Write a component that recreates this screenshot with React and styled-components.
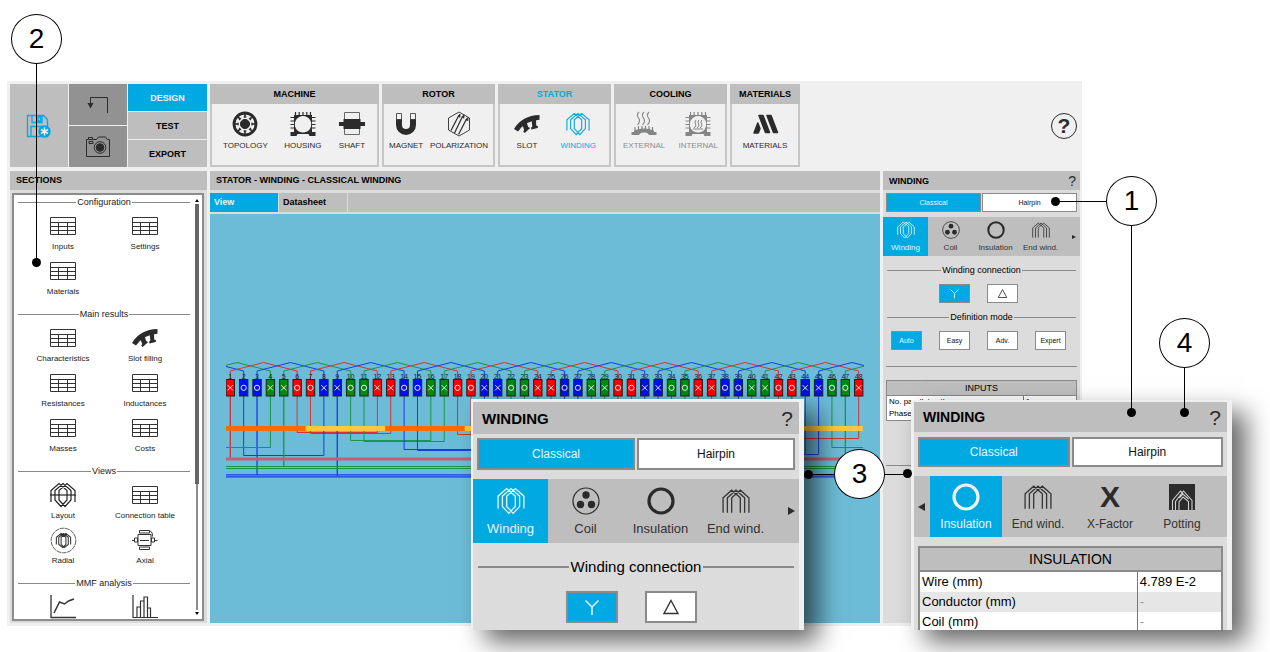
import styled, { createGlobalStyle, css, ThemeProvider } from "styled-components";

const BLUE = "#00a9e2";
const GREY = "#bebebe";
const DARK = "#2b2b2b";

const GlobalStyle = createGlobalStyle`
  * {
    box-sizing: border-box;
  }

  body {
    margin: 0;
    background: #fff;
    color: #000;
    font-family: "Liberation Sans", Arial, sans-serif;
  }

  button {
    font-family: inherit;
    padding: 0;
    margin: 0;
    border: 0;
    background: none;
    color: inherit;
    cursor: pointer;
  }

  svg {
    display: block;
  }
`;

// Size sets of the winding panel: docked, and the two enlarged copies
const small = {
  bar: 19, title: 9, titlePad: 6, help: 14,
  inset: 3, modeTop: 3, modeHeight: 19, modeFont: 7, modeGap: 1, line: 1,
  tabsTop: 5, tabHeight: 39, tabWidth: 45, tabFont: 8, icon: 18, tabPad: 4, arrow: 4,
  gap: 7, divider: 9, dividerLine: 14, choiceWidth: 31, choiceGap: 17, choicePad: 6,
};
const large = {
  bar: 32, title: 15, titlePad: 9, help: 21,
  inset: 4, modeTop: 4, modeHeight: 32, modeFont: 12, modeGap: 2, line: 2,
  tabsTop: 9, tabHeight: 64, tabWidth: 75, tabFont: 13, icon: 28, tabPad: 8, arrow: 7,
  gap: 12, divider: 15, dividerLine: 24, choiceWidth: 52, choiceGap: 27, choicePad: 10,
};
const medium = {
  ...large,
  bar: 30, title: 14, modeTop: 5, modeHeight: 30, tabHeight: 61, tabWidth: 72, tabFont: 12, tabPad: 7,
};

/* ---------- icons ---------- */

const TableIcon = () => (
  <svg width="26" height="18" viewBox="0 0 26 18" fill="none" stroke="#333">
    <path d="M.5.5h25v17H.5zM.5 5.500h25M.5 9.500h25M.5 13.500h25M8.500 5.500v12M17.500 5.500v12" />
  </svg>
);

const SlotIcon = ({ size = 28 }) => (
  <svg width={size} height={size} viewBox="0 0 28 28" fill={DARK}>
    <path d="M1 19Q9 5.500 26.500 5V9.800Q13 10.500 5 21.500Z" />
    <path d="M9 14l4-3.500 2.200 6.500 2 1-5.500 5-1.500-1.500 1-1.500z" />
    <path d="M18.500 9h4.500l.2 6.500 1.800.8-.3 1.700-6.200 1.500-.5-1.800 1.300-1.200z" />
  </svg>
);

const WindingIcon = ({ size = 24, color = "currentColor", axis }) => (
  <svg width={size} height={size} viewBox="-1 -1 26 26" fill="none" stroke={color} strokeWidth="1.200">
    <path d="M0 19V7.500L8 .5L16 7.500V17L10 23.500L4 17V7.500L12 .5L20 7.500V17L14 23.500L8 17V7.500L16 .5L24 7.500V19" />
    {axis && <path d="M-1 12H25" />}
  </svg>
);

const EndWindingIcon = ({ size = 24, color = "currentColor" }) => (
  <svg width={size} height={size} viewBox="-1 -2 26 26" fill="none" stroke={color} strokeWidth="1.200">
    <path d="M0 22V8L8 1L16 8V22M4 22V8L12 1L20 8V22M8 22V8L16 1L24 8V22" />
  </svg>
);

const CoilIcon = ({ size }) => (
  <svg width={size} height={size} viewBox="0 0 28 28">
    <circle cx="14" cy="14" r="13" fill="none" stroke={DARK} strokeWidth="1.200" />
    <g fill={DARK}>
      <circle cx="14" cy="8" r="3.700" />
      <circle cx="8.500" cy="17.500" r="3.700" />
      <circle cx="19.500" cy="17.500" r="3.700" />
    </g>
  </svg>
);

const InsulationIcon = ({ size, color = DARK }) => (
  <svg width={size} height={size} viewBox="0 0 28 28">
    <circle cx="14" cy="14" r="12" fill="none" stroke={color} strokeWidth="3.200" />
  </svg>
);

const XFactorIcon = styled.span`
  height: 28px;
  font-size: 30px;
  line-height: 28px;
  font-weight: bold;
  color: ${DARK};
`;

const PottingIcon = ({ size }) => (
  <svg width={size} height={size} viewBox="0 0 28 28">
    <path d="M1 1h26v26H1z" fill={DARK} />
    <path d="M4.500 27V17.500L12.500 8L15 10.500M7.500 27V18.500L15.500 8L24 17.500V27M11 27V19L15 14L20.500 18.500V27M11 15l4-4 5.500 5" fill="none" stroke="#d0d0d0" strokeWidth="1.100" />
  </svg>
);

const TopologyIcon = () => (
  <svg width="28" height="28" viewBox="-14 -14 28 28" stroke={DARK} fill="none">
    <circle r="11" strokeWidth="2.800" />
    <circle r="4.600" fill={DARK} />
    {[0, 45, 90, 135, 180, 225, 270, 315].map((a) => (
      <g key={a} transform={`rotate(${a})`}>
        <path d="M0 -10V-6.500" strokeWidth="1.600" />
        <path d="M-1.500 -7H1.500" strokeWidth="1" />
      </g>
    ))}
  </svg>
);

const HousingIcon = ({ color = DARK, steam }) => (
  <svg width="28" height="28" viewBox="0 0 28 28">
    <path fill={color} fillRule="evenodd" d="M5 5h18v17h3.500v4h-6l-1-2h-11l-1 2h-6v-4H5zM14 6a8.300 8.300 0 1 0 .1 0z" />
    <path stroke={color} strokeWidth="1.200" d="M6.500 2v4M10.200 2v4M14 2v3M17.800 2v4M21.500 2v4M1.500 7.500H6M1.500 11H6M1.500 14.500H6M1.500 18H6M22 7.500h4.500M22 11h4.500M22 14.500h4.500M22 18h4.500" />
    {steam && <path fill="none" stroke={color} d="M12 10q-2 2-.5 4t-1.500 4M15 10q-2 2-.5 4t-1.500 4M18 10q-2 2-.5 4t-1.500 4M9 19h10" />}
  </svg>
);

const ShaftIcon = () => (
  <svg width="28" height="28" viewBox="0 0 28 28">
    <path d="M6.500 2.500h15v22h-15z" fill="none" stroke="#666" />
    <path d="M5.500 9h17v3h4.500v4h-4.500v3h-17v-3H1v-4h4.500z" fill={DARK} />
  </svg>
);

const MagnetIcon = () => (
  <svg width="28" height="28" viewBox="0 0 28 28">
    <path d="M4 9h6v6a4 4 0 0 0 8 0V9h6v6a10 10 0 0 1-20 0z" fill={DARK} />
    <path d="M4.500 3.500h5v6h-5zM18.500 3.500h5v6h-5z" fill="#f4f4f4" stroke={DARK} strokeWidth=".8" />
  </svg>
);

const PolarizationIcon = () => (
  <svg width="28" height="28" viewBox="0 0 28 28" fill="none" stroke={DARK} strokeWidth=".9">
    <path d="M14 2l10.500 6v12L14 26 3.500 20V8z" />
    <path d="M6 20.500L13.500 6M9.500 23L17.500 6.500M13.500 24.500L21.500 9" strokeWidth="1.200" />
    <path d="M13 6l2-2-.2 3.300zM17 7l2-2.200-.2 3.300zM21 9.500l2-2-.2 3.300z" fill={DARK} />
  </svg>
);

const ExternalIcon = () => (
  <svg width="28" height="28" viewBox="0 0 28 28" fill="none" stroke="#858585">
    <path d="M9 2q-3 3-.5 6t-1 7M14 2q-3 3-.5 6t-1 7M19 2q-3 3-.5 6t-1 7" strokeWidth="1.100" />
    <path d="M5 17v4M8.500 16v4M12 16v3M15.500 16v3M19 16v4M22.500 17v4" strokeWidth="1.200" />
    <path d="M4 20.500q10-4 20 0V22h2.500v3h-7.500l-1-1.500q-4-2-8 0L9 25H1.500v-3H4z" fill="#858585" stroke="none" />
  </svg>
);

const MaterialsIcon = () => (
  <svg width="28" height="28" viewBox="0 0 28 28" stroke={DARK} fill={DARK} strokeLinejoin="round">
    <path d="M8 5.500h4l6.500 17h-4zM16 5.500h4l6.500 17h-4zM6.800 13l2.200 5.500-1.700 4.500H3z" strokeWidth="1.500" />
  </svg>
);

const SaveIcon = () => (
  <svg width="26" height="26" viewBox="0 0 26 26" fill="none" stroke={BLUE} strokeWidth="1.300">
    <path d="M1.500 2.500h16l4 4v17h-20zM6 2.500v7h10v-7M12 4h2.500v4H12zM5 23.500v-10h12" />
    <circle cx="18.500" cy="18.500" r="6.200" fill={BLUE} stroke="none" />
    <path d="M18.500 14.500v8M15 16.500l7 4M22 16.500l-7 4" stroke="#e8f6fb" strokeWidth="1.500" />
  </svg>
);

const BackIcon = () => (
  <svg width="24" height="20" viewBox="0 0 24 20" fill="none" stroke={DARK}>
    <path d="M21.500 18V2.500H4.500V9" />
    <path d="M1.500 8h6l-3 5.500z" fill={DARK} stroke="none" />
  </svg>
);

const CameraIcon = () => (
  <svg width="26" height="22" viewBox="0 0 26 22" fill="none" stroke={DARK}>
    <path d="M1.500 3.500h10l2-2.500h7l2 2.500h2v17h-23zM3.500 3V1.500h4V3M4 5.500h4v2H4z" />
    <circle cx="15" cy="11.500" r="5.800" />
    <circle cx="15" cy="11.500" r="3.800" fill={DARK} />
  </svg>
);

const RadialIcon = () => (
  <svg width="27" height="27" viewBox="-1 -1 34 34" fill="none" stroke="#333">
    <circle cx="16" cy="16" r="15.500" strokeDasharray="6 .8" />
    <path strokeWidth="1.300" d="M7 21V12L13 7L19 12V21L15 25L10 21V12L16 7L22 12V21L17 25L13 21V12L19 7L25 12V21" />
  </svg>
);

const AxialIcon = () => (
  <svg width="26" height="22" viewBox="0 0 26 22" fill="none" stroke="#333">
    <path d="M6 5.500h13v11H6zM7.500 1.500h10v2.500h-10zM7.500 18h10v2.500h-10zM2.500 9h3v4h-3zM19.500 9h3v4h-3zM0 11.500h2M23 11.500h2.500M8 11.500h9M18 1.500q3 2 2.500 6" />
  </svg>
);

const CurveIcon = () => (
  <svg width="26" height="24" viewBox="0 0 26 24" fill="none" stroke="#333" strokeWidth="1.300">
    <path d="M1 0v22.500h25" />
    <path d="M4 18L9.500 7l5 2 4-3L24 4" strokeWidth="1.500" />
  </svg>
);

const BarsIcon = () => (
  <svg width="26" height="24" viewBox="0 0 26 24" fill="none" stroke="#333" strokeWidth="1.200">
    <path d="M1 0v22.500h25M5 22V12h3.500v10M8.500 12V6H12v16M12 6V2h3.500v20M15.500 13H18.500v9" />
  </svg>
);

/* ---------- page ---------- */

const Page = styled.main`
  position: relative;
  display: flex;
  flex-direction: column;
  height: 100vh;
  min-height: 600px;
  padding: 81px 188px 26px 7px;
  overflow: hidden;
`;

const Window = styled.div`
  flex: 1;
  min-height: 0;
  display: flex;
  flex-direction: column;
  gap: 4px;
  padding: 3px 2px 3px 3px;
  background: #f0f0f0;
`;

const Ribbon = styled.header`
  display: flex;
  gap: 3px;
  height: 83px;
`;

const QuickTiles = styled.div`
  display: grid;
  grid-template-columns: 58px 58px 79px;
  gap: 1px;
  width: 197px;
`;

const TileColumn = styled.div`
  display: flex;
  flex-direction: column;
  gap: 1px;
`;

const Tile = styled.button`
  flex: 1;
  display: flex;
  align-items: center;
  justify-content: center;
  background: ${(p) => (p.$dark ? "#929292" : GREY)};
`;

const ModeTile = styled.button`
  flex: 1;
  font-size: 9px;
  font-weight: bold;
  background: ${(p) => (p.$active ? BLUE : GREY)};
  color: ${(p) => (p.$active ? "#e8f6fb" : "#000")};
`;

const Group = styled.section`
  width: ${(p) => p.$width}px;
  border: 2px solid #c6c6c6;
  border-top: 0;
`;

const GroupTitle = styled.h2`
  margin: 0 -2px;
  background: ${GREY};
  color: ${(p) => (p.$active ? BLUE : "#000")};
  font-size: 9px;
  line-height: 20px;
  text-align: center;
`;

const GroupBody = styled.div`
  display: flex;
  justify-content: ${(p) => (p.$single ? "center" : "space-between")};
  padding: 6px ${(p) => p.$pad}px 0;
`;

const GroupButton = styled.button`
  display: flex;
  flex-direction: column;
  align-items: center;
  gap: 2px;
  min-width: 28px;
  font-size: 8px;
  line-height: 12px;
  color: ${(p) => p.$color || DARK};

  svg {
    height: 28px;
  }
`;

const HelpButton = styled.button`
  align-self: center;
  margin: 0 3px 0 auto;
  width: 26px;
  height: 26px;
  border: 1px solid ${DARK};
  border-radius: 50%;
  font-size: 21px;
  line-height: 24px;
  font-weight: bold;
  color: ${DARK};
`;

const Columns = styled.div`
  flex: 1;
  min-height: 0;
  display: flex;
  gap: 3px;
`;

const Panel = styled.section`
  display: flex;
  flex-direction: column;
  min-height: 0;
  background: #dcdcdc;
  ${(p) => (p.$grow ? css`flex: 1; min-width: 0;` : css`width: 197px;`)}
`;

const PanelTitle = styled.h2`
  margin: 0;
  padding-left: 6px;
  background: ${GREY};
  font-size: 9px;
  line-height: 19px;
`;

const SectionBox = styled.div`
  flex: 1;
  min-height: 0;
  display: flex;
  margin: 3px 3px 2px 2px;
  padding-right: 3px;
  border: 2px solid #8c8c8c;
  background: #fff;
`;

const SectionList = styled.div`
  flex: 1;
  overflow: hidden;
  display: flex;
  flex-direction: column;
  gap: 4px;
  padding: 0 4px;
`;

const SectionTitle = styled.h3`
  display: flex;
  align-items: center;
  gap: 1px;
  margin: 0 0 4px;
  font-size: 9px;
  line-height: 14px;
  font-weight: normal;
  color: #222;

  &::before,
  &::after {
    content: "";
    flex: 1;
    height: 1px;
    background: #888;
  }
`;

const SectionGrid = styled.div`
  display: grid;
  grid-template-columns: 1fr 1fr;
  padding: 0 4px;
`;

const SectionItem = styled.button`
  display: flex;
  flex-direction: column;
  align-items: center;
  height: 45px;
  font-size: 8px;
  line-height: 12px;
  white-space: nowrap;
  color: #222;
`;

const ItemIcon = styled.span`
  height: 28px;
  display: flex;
  align-items: center;
  padding-bottom: 2px;
`;

const ScrollBar = styled.div`
  width: 5px;
  display: flex;
  flex-direction: column;
  align-items: center;
  padding: 2px 0;
`;

const Track = styled.div`
  flex: 1;
  width: 2px;
  background: #8c8c8c;
`;

const Thumb = styled.div`
  width: 4px;
  height: 69%;
  margin-left: -1px;
  background: #666;
`;

const ScrollArrow = styled.span`
  border: 2px solid transparent;
  border-${(p) => (p.$up ? "bottom" : "top")}: 3px solid #000;
  margin-${(p) => (p.$up ? "bottom" : "top")}: 2px;
`;

const ViewTabs = styled.nav`
  display: flex;
  gap: 1px;
  margin: 3px 0 2px;

  &::after {
    content: "";
    flex: 1;
    background: ${GREY};
  }
`;

const ViewTab = styled.button`
  width: 68px;
  padding-left: 4px;
  text-align: left;
  font-size: 9px;
  font-weight: bold;
  line-height: 19px;
  background: ${(p) => (p.$active ? BLUE : GREY)};
  color: ${(p) => (p.$active ? "#e8f6fb" : "#000")};
`;

const Canvas = styled.div`
  flex: 1;
  min-height: 0;
  display: flex;
  align-items: center;
  padding: 0 16px;
  background: #6dbcd7;

  svg {
    width: 100%;
    height: auto;
  }
`;

/* ---------- winding panel, sized by the theme ---------- */

const Bar = styled.h2`
  display: flex;
  justify-content: space-between;
  align-items: center;
  margin: 0;
  height: ${(p) => p.theme.bar}px;
  padding: 0 ${(p) => p.theme.inset + p.theme.line}px 0 ${(p) => p.theme.titlePad}px;
  background: ${GREY};
  font-size: ${(p) => p.theme.title}px;
`;

const BarHelp = styled.button`
  font-size: ${(p) => p.theme.help}px;
  line-height: 1;
  color: ${DARK};
`;

const ModeRow = styled.div`
  display: flex;
  gap: ${(p) => p.theme.modeGap}px;
  margin: ${(p) => p.theme.modeTop}px ${(p) => p.theme.inset}px ${(p) => p.theme.tabsTop}px;
`;

const ModeButton = styled.button`
  display: flex;
  align-items: center;
  justify-content: center;
  height: ${(p) => p.theme.modeHeight}px;
  border: ${(p) => p.theme.line}px solid #8a8a8a;
  background: ${(p) => (p.$active ? BLUE : "#fff")};
  color: ${(p) => (p.$active ? "#e8f6fb" : "#111")};
  font-size: ${(p) => p.theme.modeFont}px;
  ${(p) => (p.$choice ? css`width: ${p.theme.choiceWidth}px;` : css`flex: 1;`)}
`;

const TabRow = styled.nav`
  display: flex;
  align-items: center;
  height: ${(p) => p.theme.tabHeight}px;
  background: ${GREY};
`;

const Tab = styled.button`
  display: flex;
  flex-direction: column;
  align-items: center;
  justify-content: space-between;
  width: ${(p) => p.theme.tabWidth}px;
  height: 100%;
  padding: ${(p) => p.theme.tabPad}px 0;
  background: ${(p) => (p.$active ? BLUE : "none")};
  color: ${(p) => (p.$active ? "#e8f6fb" : "#333")};
  font-size: ${(p) => p.theme.tabFont}px;
  line-height: 1;
  white-space: nowrap;
`;

const TabArrow = styled.button`
  font-size: 0;
  margin: ${(p) => (p.$left ? "0 5px 0 4px" : "0 4px 0 auto")};
  border: solid transparent;
  border-width: ${(p) => Math.ceil(p.theme.arrow / 2)}px ${(p) => p.theme.arrow}px;
  border-${(p) => (p.$left ? "right" : "left")}-color: ${DARK};
  border-${(p) => (p.$left ? "left" : "right")}-width: 0;
`;

const Divider = styled.h3`
  display: flex;
  align-items: center;
  gap: ${(p) => p.theme.line}px;
  margin: ${(p) => p.theme.gap}px ${(p) => p.theme.inset + 1}px;
  font-size: ${(p) => p.theme.divider}px;
  line-height: ${(p) => p.theme.dividerLine}px;
  font-weight: normal;

  &::before,
  &::after {
    content: "";
    flex: 1;
    height: ${(p) => p.theme.line}px;
    background: #8a8a8a;
  }
`;

const Choices = styled.div`
  display: flex;
  justify-content: center;
  gap: ${(p) => p.theme.choiceGap}px;
  padding-right: ${(p) => p.theme.choicePad}px;
`;

const Rule = styled.hr`
  margin: ${(p) => p.$top}px 3px 0;
  border: 0;
  border-top: 1px solid #8a8a8a;
`;

const Sheet = styled.table`
  margin: ${(p) => p.$top}px ${(p) => p.theme.inset}px 0;
  border: ${(p) => p.theme.line}px solid #8a8a8a;
  border-collapse: collapse;
  table-layout: fixed;
  width: calc(100% - ${(p) => p.theme.inset * 2}px);
  background: #fff;
  font-size: ${(p) => (p.$big ? 13 : 8)}px;
  line-height: ${(p) => (p.$big ? 20 : 12)}px;

  th {
    padding: 0;
    background: ${GREY};
    border-bottom: ${(p) => p.theme.line}px solid #8a8a8a;
    font-size: ${(p) => (p.$big ? 14 : 9)}px;
    line-height: ${(p) => (p.$big ? 22 : 14)}px;
    font-weight: normal;
  }

  td {
    padding: 0 2px;
    white-space: nowrap;
  }

  td + td {
    border-left: 1px solid #777;
  }

  tr:nth-child(even) td {
    background: ${(p) => (p.$big ? "#e6e6e6" : "#fff")};
  }
`;

const NameColumn = styled.col`
  width: 72%;
`;

const Muted = styled.span`
  color: #999;
`;

// Enlarged copies float over the window
const Popup = styled.section`
  position: absolute;
  left: ${(p) => p.$left}px;
  top: ${(p) => p.$top}px;
  width: ${(p) => p.$width}px;
  height: ${(p) => p.$height}px;
  overflow: hidden;
  border: solid #f0f0f0;
  border-width: ${(p) => p.$edge};
  background: #dcdcdc;
  box-shadow: 14px 12px 24px rgba(0, 0, 0, 0.6);
`;

/* ---------- callouts ---------- */

const Bubble = styled.span`
  position: absolute;
  left: ${(p) => p.$x - 25}px;
  top: ${(p) => p.$y - 25}px;
  width: 51px;
  height: 50px;
  border: 1px solid #000;
  border-radius: 50%;
  background: #fff;
  font-size: 28px;
  line-height: 48px;
  text-align: center;
`;

const Leader = styled.span`
  position: absolute;
  left: ${(p) => p.$x}px;
  top: ${(p) => p.$y}px;
  width: ${(p) => p.$w || 1}px;
  height: ${(p) => p.$h || 1}px;
  background: #000;
`;

const Dot = styled.span`
  position: absolute;
  left: ${(p) => p.$x - 4}px;
  top: ${(p) => p.$y - 4}px;
  width: 9px;
  height: 9px;
  border-radius: 50%;
  background: #000;
`;

/* ---------- data ---------- */

const groups = [
  { title: "MACHINE", width: 169, pad: 11, items: [
    ["TOPOLOGY", <TopologyIcon />], ["HOUSING", <HousingIcon />], ["SHAFT", <ShaftIcon />]] },
  { title: "ROTOR", width: 113, pad: 5, items: [
    ["MAGNET", <MagnetIcon />], ["POLARIZATION", <PolarizationIcon />]] },
  { title: "STATOR", width: 113, pad: 13, active: true, items: [
    ["SLOT", <SlotIcon />], ["WINDING", <WindingIcon />, BLUE]] },
  { title: "COOLING", width: 113, pad: 7, items: [
    ["EXTERNAL", <ExternalIcon />, "#8c8c8c"], ["INTERNAL", <HousingIcon color="#858585" steam />, "#8c8c8c"]] },
  { title: "MATERIALS", width: 70, pad: 7, items: [["MATERIALS", <MaterialsIcon />]] },
];

const table = <TableIcon />;

const sections = [
  { title: "Configuration", items: [["Inputs", table], ["Settings", table], ["Materials", table]] },
  { title: "Main results", items: [
    ["Characteristics", table], ["Slot filling", <SlotIcon />],
    ["Resistances", table], ["Inductances", table],
    ["Masses", table], ["Costs", table]] },
  { title: "Views", items: [
    ["Layout", <WindingIcon axis size={26} />], ["Connection table", table],
    ["Radial", <RadialIcon />], ["Axial", <AxialIcon />]] },
  { title: "MMF analysis", items: [["", <CurveIcon />, "MMF curve"], ["", <BarsIcon />, "MMF harmonics"]] },
];

/* ---------- winding diagram ---------- */

const RED = "#ff0000";
const GREEN = "#008a10";
const NAVY = "#0010f0";
const phases = [RED, NAVY, NAVY, GREEN, GREEN, RED];
const signs = "XOOXXOOXXOOX";

const slotX = (n) => 230.300 + (n - 1) * 13.370;
const phaseOf = (n) => phases[(n + 11) % 6];

// [from slot, to slot, depth]
const jumpers = [
  [6, 12, 432], [7, 13, 433], [10, 16, 440], [11, 17, 441], [2, 8, 455],
  [14, 20, 449], [15, 21, 450], [18, 24, 434], [19, 25, 435], [42, 48, 438],
  [38, 44, 454], [39, 45, 454], [22, 28, 440], [23, 29, 441], [26, 32, 449],
  [27, 33, 450], [30, 36, 434], [31, 37, 435], [34, 40, 441], [35, 41, 441],
];
const drops = [[1, 459], [3, 475], [5, 467], [9, 476], [47, 468], [43, 459]];

const WindingDiagram = () => (
  <svg viewBox="226 358 638 121" fill="none">
    <g opacity=".75">
      {Array.from({ length: 26 }, (_, i) => i * 2 - 3).map((n) => {
        const a = slotX(n);
        const b = slotX(n + 5);
        return <path key={n} stroke={phaseOf(n)} d={`M${a} 380V371L${(a + b) / 2} 362.500L${b} 371V380`} />;
      })}
      {jumpers.map(([a, b, y]) => (
        <path key={a} stroke={phaseOf(a)} d={`M${slotX(a)} 396V${y + 0.5}H${slotX(b)}V396`} />
      ))}
      {drops.map(([n, y]) => (
        <path key={n} stroke={phaseOf(n)} strokeWidth="1.300" d={`M${slotX(n)} 396V${y}`} />
      ))}
      <path stroke={GREEN} d={`M${slotX(4)} 396V447.500H226M${slotX(46)} 396V447.500H863`} />
      <path stroke="#e04050" strokeWidth="3" d="M226 459H863" />
      <path stroke={GREEN} strokeWidth="1.200" d="M226 466.500H863M226 468.500H863" />
      <path stroke={NAVY} strokeWidth="1.200" d="M226 474.800H863M226 476.800H863" />
    </g>
    {Array.from({ length: 8 }, (_, i) => (
      <rect key={i} x={226 + i * 79.600} y="426" width="79.600" height="5" fill={i % 2 ? "#ffc83c" : "#ff6a00"} />
    ))}
    {Array.from({ length: 48 }, (_, i) => {
      const x = slotX(i + 1);
      return (
        <g key={i}>
          <text x={x} y="379" textAnchor="middle" fontSize="7" fill="#123">{i + 1}</text>
          <rect x={x - 4.200} y="379.500" width="8.400" height="16.500" fill={phaseOf(i + 1)} stroke="#222" />
          {signs[i % 12] === "X" ? (
            <path stroke="#fff" d={`M${x - 2.600} 385.200l5.200 5.200m0-5.200l-5.200 5.200`} strokeWidth=".9" />
          ) : (
            <circle cx={x} cy="387.800" r="2.600" stroke="#fff" strokeWidth=".9" />
          )}
        </g>
      );
    })}
  </svg>
);

/* ---------- parts ---------- */

const StarIcon = ({ size }) => (
  <svg width={size} height={size} viewBox="0 0 18 18" fill="none" stroke="#e8f6fb" strokeWidth="1.500">
    <path d="M2.500 2.500L9 9L15.500 2.500M9 9V17" />
  </svg>
);

const DeltaIcon = ({ size }) => (
  <svg width={size} height={size} viewBox="0 0 18 18" fill="none" stroke="#333" strokeWidth="1.400">
    <path d="M9 2.500L16 15.500H2Z" />
  </svg>
);

const PanelHead = () => (
  <>
    <Bar>
      WINDING
      <BarHelp>?</BarHelp>
    </Bar>
    <ModeRow>
      <ModeButton $active>Classical</ModeButton>
      <ModeButton>Hairpin</ModeButton>
    </ModeRow>
  </>
);

const MainTabs = ({ icon }) => (
  <TabRow>
    <Tab $active><WindingIcon size={icon} />Winding</Tab>
    <Tab><CoilIcon size={icon} />Coil</Tab>
    <Tab><InsulationIcon size={icon} />Insulation</Tab>
    <Tab><EndWindingIcon size={icon} />End wind.</Tab>
    <TabArrow aria-label="Next tabs" />
  </TabRow>
);

const Connection = ({ icon }) => (
  <>
    <Divider>Winding connection</Divider>
    <Choices>
      <ModeButton $choice $active aria-label="Star"><StarIcon size={icon} /></ModeButton>
      <ModeButton $choice aria-label="Delta"><DeltaIcon size={icon} /></ModeButton>
    </Choices>
  </>
);

const App = () => {
  return <Page>
    <GlobalStyle />
    <Window>
      <Ribbon>
        <QuickTiles>
          <Tile aria-label="Save"><SaveIcon /></Tile>
          <TileColumn>
            <Tile $dark aria-label="Back"><BackIcon /></Tile>
            <Tile $dark aria-label="Snapshot"><CameraIcon /></Tile>
          </TileColumn>
          <TileColumn>
            <ModeTile $active>DESIGN</ModeTile>
            <ModeTile>TEST</ModeTile>
            <ModeTile>EXPORT</ModeTile>
          </TileColumn>
        </QuickTiles>
        {groups.map((g) => (
          <Group key={g.title} $width={g.width}>
            <GroupTitle $active={g.active}>{g.title}</GroupTitle>
            <GroupBody $pad={g.pad} $single={g.items.length === 1}>
              {g.items.map(([label, icon, color]) => (
                <GroupButton key={label} $color={color}>{icon}{label}</GroupButton>
              ))}
            </GroupBody>
          </Group>
        ))}
        <HelpButton>?</HelpButton>
      </Ribbon>

      <Columns>
        <Panel>
          <PanelTitle>SECTIONS</PanelTitle>
          <SectionBox>
            <SectionList>
              {sections.map((s) => (
                <section key={s.title}>
                  <SectionTitle>{s.title}</SectionTitle>
                  <SectionGrid>
                    {s.items.map(([label, icon, hint]) => (
                      <SectionItem key={label || hint} aria-label={hint}>
                        <ItemIcon>{icon}</ItemIcon>
                        {label}
                      </SectionItem>
                    ))}
                  </SectionGrid>
                </section>
              ))}
            </SectionList>
            <ScrollBar>
              <ScrollArrow $up />
              <Track><Thumb /></Track>
              <ScrollArrow />
            </ScrollBar>
          </SectionBox>
        </Panel>

        <Panel $grow>
          <PanelTitle>STATOR - WINDING - CLASSICAL WINDING</PanelTitle>
          <ViewTabs>
            <ViewTab $active>View</ViewTab>
            <ViewTab>Datasheet</ViewTab>
          </ViewTabs>
          <Canvas>
            <WindingDiagram />
          </Canvas>
        </Panel>

        <ThemeProvider theme={small}>
          <Panel>
            <PanelHead />
            <MainTabs icon={small.icon} />
            <Connection icon={11} />
            <Divider>Definition mode</Divider>
            <Choices>
              <ModeButton $choice $active>Auto</ModeButton>
              <ModeButton $choice>Easy</ModeButton>
              <ModeButton $choice>Adv.</ModeButton>
              <ModeButton $choice>Expert</ModeButton>
            </Choices>
            <Rule $top={16} />
            <Sheet $top={13}>
              <colgroup><NameColumn /><col /></colgroup>
              <thead>
                <tr><th colSpan={2}>INPUTS</th></tr>
              </thead>
              <tbody>
                <tr><td>No. parallel paths</td><td>1</td></tr>
                <tr><td>Phase</td><td /></tr>
              </tbody>
            </Sheet>
            <Rule $top={44} />
          </Panel>
        </ThemeProvider>
      </Columns>
    </Window>

    <ThemeProvider theme={large}>
      <Popup $left={471} $top={399} $width={333} $height={231} $edge="3px 5px 0 2px">
        <PanelHead />
        <MainTabs icon={large.icon} />
        <Connection icon={18} />
      </Popup>
    </ThemeProvider>

    <ThemeProvider theme={medium}>
      <Popup $left={911} $top={400} $width={321} $height={230} $edge="2px 5px 0 3px">
        <PanelHead />
        <TabRow>
          <TabArrow $left aria-label="Previous tabs" />
          <Tab $active><InsulationIcon size={28} color="#f2f2f2" />Insulation</Tab>
          <Tab><EndWindingIcon size={28} />End wind.</Tab>
          <Tab><XFactorIcon>X</XFactorIcon>X-Factor</Tab>
          <Tab><PottingIcon size={28} />Potting</Tab>
        </TabRow>
        <Sheet $big $top={9}>
          <colgroup><NameColumn /><col /></colgroup>
          <thead>
            <tr><th colSpan={2}>INSULATION</th></tr>
          </thead>
          <tbody>
            <tr><td>Wire (mm)</td><td>4.789 E-2</td></tr>
            <tr><td>Conductor (mm)</td><td><Muted>-</Muted></td></tr>
            <tr><td>Coil (mm)</td><td><Muted>-</Muted></td></tr>
            <tr><td>&nbsp;</td><td /></tr>
          </tbody>
        </Sheet>
      </Popup>
    </ThemeProvider>

    <Leader $x={36} $y={62} $h={200} />
    <Dot $x={36} $y={262} />
    <Bubble $x={36} $y={39}>2</Bubble>

    <Leader $x={1056} $y={201} $w={52} />
    <Dot $x={1055} $y={201} />
    <Leader $x={1131} $y={225} $h={187} />
    <Dot $x={1131} $y={412} />
    <Bubble $x={1131} $y={201}>1</Bubble>

    <Leader $x={1184} $y={367} $h={45} />
    <Dot $x={1184} $y={412} />
    <Bubble $x={1184} $y={343}>4</Bubble>

    <Leader $x={808} $y={474} $w={100} />
    <Dot $x={808} $y={474} />
    <Dot $x={907} $y={473} />
    <Bubble $x={859} $y={474}>3</Bubble>
  </Page>;
};

export default App;
